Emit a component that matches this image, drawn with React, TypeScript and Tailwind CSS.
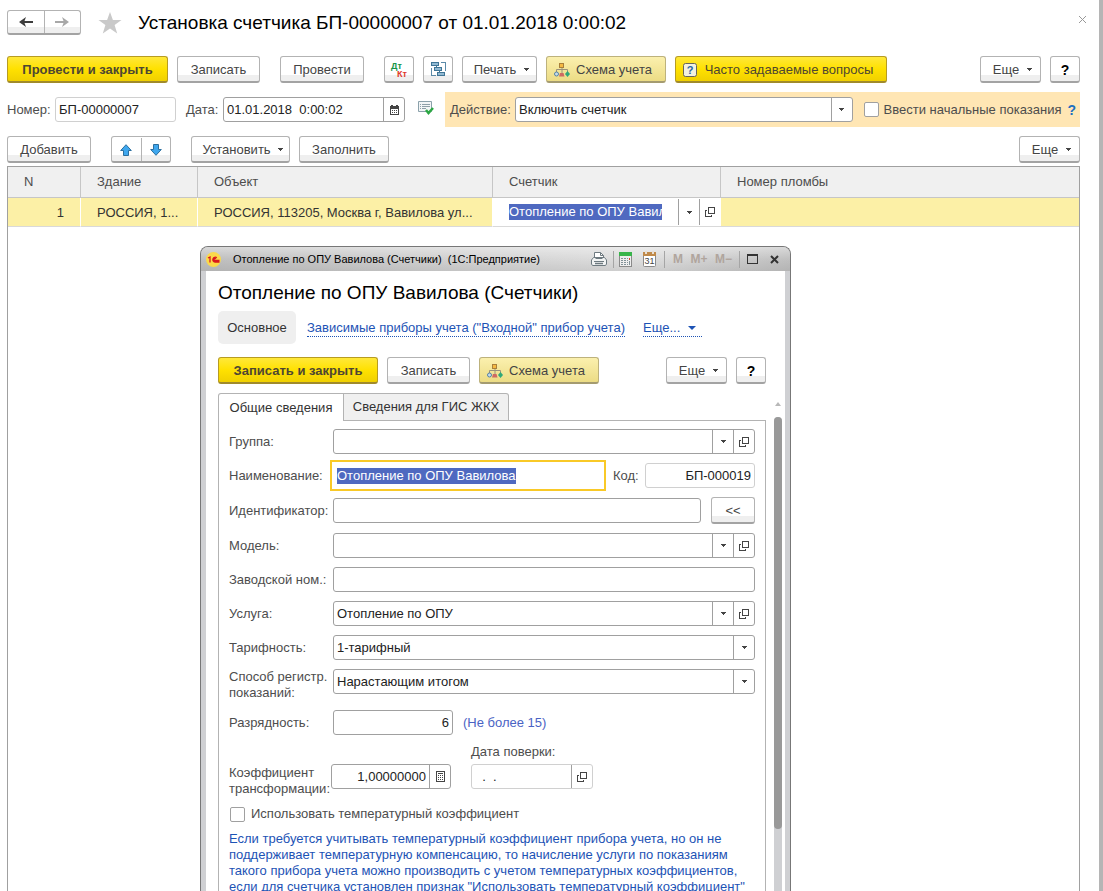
import type { ReactNode } from "react";

const BTN = "flex h-[27px] shrink-0 items-center justify-center whitespace-nowrap rounded-[3px] border border-b-2 pt-px ";
const WHITE = BTN + "border-[#b3b3b3] border-b-[#a3a3a3] bg-[linear-gradient(#fff_73%,#efefef_73%)] text-[#444]";
const YELLOW = BTN + "border-[#b79c22] border-b-[#a08a2c] bg-[linear-gradient(#ffe83a,#ffe100_50%,#f0d000)] text-[#4d4633]";
const PALE = BTN + "border-[#bdb27c] border-b-[#a49b70] bg-[linear-gradient(#fbf0ae,#ecdc85)] text-[#444]";
const FIELD = "flex h-[25px] items-stretch overflow-hidden rounded-[3px] border bg-white ";
const DARK = FIELD + "border-[#a0a0a0]";
const LIGHT = FIELD + "border-[#d0d0d0]";
const INPUT = "w-full min-w-0 flex-1 bg-transparent px-[3px] text-[#222] outline-none";
const SIDE = "flex w-[21px] shrink-0 items-center justify-center border-l border-[#a0a0a0]";

function Caret() {
  return (
    <svg width="5" height="3" viewBox="0 0 5 3" className="shrink-0" shapeRendering="crispEdges">
      <path d="M0 0H5V1H4V2H3V3H2V2H1V1H0Z" fill="#444" />
    </svg>
  );
}

function OpenIcon() {
  return (
    <svg width="10" height="10" viewBox="0 0 10 10" fill="none" stroke="#444" shapeRendering="crispEdges">
      <path d="M3.5 0.5H9.5V6.5H3.5ZM2 3.5H0.5V9.5H6.5V8" />
    </svg>
  );
}

function SchemeIcon() {
  return (
    <svg width="16" height="14" viewBox="0 0 16 14" fill="none">
      <path d="M8 4V10M2.5 10V6.5H13.5V10" stroke="#9a927a" />
      <rect x="5.5" y="0.5" width="4" height="4" fill="#f5b942" stroke="#a9803a" />
      <circle cx="2.5" cy="11" r="2" fill="#c6dcea" stroke="#5482a3" />
      <path d="M5 13.5L6 10H9.500L10.500 13.500Z" fill="#cf6a62" />
      <path d="M13.500 8L16 11L13.500 14L11 11Z" fill="#30a878" />
    </svg>
  );
}

function StructureIcon() {
  return (
    <svg width="15" height="15" viewBox="0 0 15 15" fill="none" stroke="#3f7596" shapeRendering="crispEdges">
      <path d="M10 0.5H14.5V9M0.5 6V13.5H5" stroke="#5b8aa8" />
      <rect x="0.5" y="0.5" width="7" height="3" fill="#92bad3" />
      <rect x="3.5" y="5.5" width="7" height="3" fill="#92bad3" />
      <rect x="6.5" y="10.500" width="7" height="3" fill="#92bad3" />
      <path d="M5.5 4V5M8.500 9V10" />
    </svg>
  );
}

function CalendarIcon() {
  return (
    <svg width="9" height="10" viewBox="0 0 9 10" shapeRendering="crispEdges">
      <path d="M0 1H1V0H3V1H6V0H8V1H9V10H0ZM1 4V9H8V4Z" fill="#444" fillRule="evenodd" />
      <path d="M2 5H3V6H2ZM4 5H5V6H4ZM6 5H7V6H6ZM2 7H3V8H2ZM4 7H5V8H4ZM6 7H7V8H6Z" fill="#444" />
    </svg>
  );
}

function CalcIcon() {
  return (
    <svg width="9" height="11" viewBox="0 0 9 11" shapeRendering="crispEdges">
      <path d="M0.5 0.5H8.5V10.5H0.5Z" fill="none" stroke="#444" />
      <path d="M2 2H7V3H2ZM2 4H3V5H2ZM4 4H5V5H4ZM6 4H7V5H6ZM2 6H3V7H2ZM4 6H5V7H4ZM6 6H7V7H6ZM2 8H3V9H2ZM4 8H5V9H4ZM6 8H7V9H6Z" fill="#444" />
    </svg>
  );
}

function Arrow({ up }: { up?: boolean }) {
  return (
    <svg width="12" height="12" viewBox="0 0 12 12">
      <path d={up ? "M6 0.7L11.3 6.5H8.5V11.5H3.5V6.5H0.7Z" : "M6 11.3L11.3 5.500H8.5V0.5H3.5V5.5H0.7Z"} fill="#3fa7ee" stroke="#2b6f9f" />
    </svg>
  );
}

function NavArrow({ right }: { right?: boolean }) {
  return (
    <svg width="14" height="10" viewBox="0 0 14 10" fill={right ? "#a8a8a8" : "#3c3c3c"}>
      <path d={right ? "M0 4H8.500L7 0L14 5L7 10L8.500 6H0Z" : "M14 4H5.5L7 0L0 5L7 10L5.5 6H14Z"} />
    </svg>
  );
}

function Choice({ id, value, className = "" }: { id: string; value: string; className?: string }) {
  return (
    <div className={"grid h-[25px] grid-cols-[1fr_21px] overflow-hidden rounded-[3px] border border-[#a0a0a0] bg-white " + className}>
      <select id={id} className="col-span-2 col-start-1 row-start-1 w-full appearance-none bg-transparent pl-[3px] pr-6 text-[#222] outline-none">
        <option>{value}</option>
      </select>
      <span className="pointer-events-none col-start-2 row-start-1 flex items-center justify-center border-l border-[#a0a0a0]">
        <Caret />
      </span>
    </div>
  );
}

function Lookup({ id, value }: { id: string; value: string }) {
  return (
    <div className={DARK + " flex-1"}>
      <input id={id} defaultValue={value} className={INPUT} />
      <button className={SIDE} aria-label="Выбрать"><Caret /></button>
      <button className={SIDE} aria-label="Открыть"><OpenIcon /></button>
    </div>
  );
}

function Row({ id, label, children }: { id: string; label: string; children: ReactNode }) {
  return (
    <div className="flex items-center">
      <label htmlFor={id} className="w-[104px] shrink-0 whitespace-nowrap">{label}</label>
      {children}
    </div>
  );
}

function More() {
  return (
    <button className={WHITE + " w-[61px] gap-2 pl-1"}>Еще <Caret /></button>
  );
}

function Help() {
  return <button className={WHITE + " w-[30px] text-[14px] font-bold text-black"}>?</button>;
}

function TitleTools() {
  return (
    <div className="flex h-full items-center">
      <button aria-label="Печать" className="mr-[6px]">
        <svg width="16" height="14" viewBox="0 0 16 14" fill="none" stroke="#6e7a80">
          <path d="M3.5 6V0.5H9.5L12.5 3.5V6" fill="#fff" />
          <path d="M9.5 0.5V3.5H12.5" />
          <path d="M2.5 5.5H13.5L15.5 8V12L14.5 13.5H1.5L0.5 12V8Z" fill="#f2f4f4" />
          <path d="M4.5 6.5H11.5M3 9.5H13" />
          <path d="M4 11.5H12" strokeWidth="1.500" />
        </svg>
      </button>
      <span className="h-[17px] w-px bg-[#a5a5a5]" />
      <button aria-label="Калькулятор" className="ml-[5px] mr-[11px]">
        <svg width="13" height="15" viewBox="0 0 13 15" shapeRendering="crispEdges">
          <path d="M0.5 0.5H12.5V14.5H0.5Z" fill="#eee" stroke="#8a8a8a" />
          <path d="M0 0H13V4H0Z" fill="#38b54a" />
          <path d="M2 6H4V7H2ZM5 6H7V7H5ZM2 8H4V9H2ZM5 8H7V9H5ZM2 10H4V11H2ZM5 10H7V11H5ZM2 12H4V13H2ZM5 12H7V13H5ZM8 6H9V7H8ZM8 8H9V9H8ZM8 10H9V11H8ZM8 12H9V13H8Z" fill="#829298" />
          <path d="M10 6H11V8H10Z" fill="#e2452f" />
          <path d="M10 9H11V13H10Z" fill="#829298" />
        </svg>
      </button>
      <button aria-label="Календарь" className="mr-[8px]">
        <svg width="13" height="16" viewBox="0 0 13 16">
          <rect x="0.5" y="1.5" width="12" height="14" rx="1" fill="#fff" stroke="#8a8a8a" />
          <path d="M0 1H13V5H0Z" fill="#c08a4a" />
          <path d="M3 0V3M10 0V3" stroke="#e9dfd2" strokeWidth="2" />
          <text x="6.500" y="13" fontSize="9" textAnchor="middle" fill="#444">31</text>
        </svg>
      </button>
      <span className="h-[17px] w-px bg-[#a5a5a5]" />
      <div className="flex w-[74px] justify-between pl-2 pr-[7px] text-[12px] font-bold text-[#b0a59d]">
        <button>M</button><button>M+</button><button>M−</button>
      </div>
      <span className="h-[17px] w-px bg-[#a5a5a5]" />
      <button aria-label="Развернуть" className="ml-[7px] mr-[12px]">
        <svg width="11" height="10" viewBox="0 0 11 10" shapeRendering="crispEdges">
          <path d="M0.5 0.5H10.5V9.5H0.5Z" fill="none" stroke="#333" /><path d="M0 0H11V2H0Z" fill="#333" />
        </svg>
      </button>
      <button aria-label="Закрыть окно">
        <svg width="9" height="9" viewBox="0 0 9 9"><path d="M1 1L8 8M8 1L1 8" stroke="#333" strokeWidth="2" /></svg>
      </button>
    </div>
  );
}

function MeterWindow() {
  return (
    <section className="absolute bottom-0 left-[200px] top-[246px] flex w-[591px] flex-col overflow-hidden rounded-t-[8px] border border-b-0 border-[#777] bg-[#cfd0d3]">
      <header className="flex h-6 shrink-0 items-center bg-[linear-gradient(#fff6,#fff0_50%,#0001),linear-gradient(90deg,#bfbfbf,#d4d4d4_50%,#dedede_75%,#c0c0c0)] pl-[5px] pr-[11px] text-black">
        <svg width="15" height="15" viewBox="0 0 15 15" className="mr-[12px] shrink-0">
          <circle cx="7.5" cy="7.5" r="7.5" fill="#fbd94a" />
          <path d="M2 6L4 5V10.500M10.8 5.800A2.400 2.400 0 1 0 9 10H13.500M9.800 7A1 1 0 1 0 9 8.500H13.500" fill="none" stroke="#d8171e" strokeWidth="1.300" />
        </svg>
        <h2 className="flex-1 whitespace-pre text-[11px]">Отопление по ОПУ Вавилова (Счетчики)  (1С:Предприятие)</h2>
        <TitleTools />
      </header>
      <div className="mx-[5px] flex min-h-0 flex-1 flex-col bg-white pl-[12px]">
        <h1 className="mt-[10px] text-[19px] leading-6 text-black">Отопление по ОПУ Вавилова (Счетчики)</h1>
        <nav className="mt-[6px] flex items-center">
          <button className="h-[33px] w-[78px] rounded-[5px] bg-[#efefef] pt-px text-[#333]">Основное</button>
          <a href="#devices" className="ml-[11px] mt-[2px] whitespace-nowrap border-b border-dotted border-[#1d53b5] leading-4 text-[#1d53b5]">Зависимые приборы учета ("Входной" прибор учета)</a>
          <a href="#more" className="ml-[18px] mt-[2px] flex w-[59px] items-center gap-2 whitespace-nowrap border-b border-dotted border-[#1d53b5] leading-4 text-[#1d53b5]">
            Еще...
            <svg width="8" height="4" viewBox="0 0 8 4"><path d="M0 0H8L4 4Z" fill="#1d53b5" /></svg>
          </a>
        </nav>
        <div className="mr-[19px] mt-[13px] flex gap-[9px]">
          <button className={YELLOW + " w-[160px] font-bold"}>Записать и закрыть</button>
          <button className={WHITE + " w-[83px]"}>Записать</button>
          <button className={PALE + " w-[120px] gap-[6px] pr-[6px]"}><SchemeIcon />Схема учета</button>
          <div className="ml-auto flex gap-[9px]"><More /><Help /></div>
        </div>
        <div className="mt-[9px] flex min-h-0 flex-1">
          <div className="flex min-w-0 flex-1 flex-col">
            <div className="z-10 flex" role="tablist">
              <button role="tab" aria-selected="true" className="-mb-px h-7 w-[126px] rounded-tl-[3px] border border-b-0 border-[#b3b3b3] bg-white text-[#333]">Общие сведения</button>
              <button role="tab" aria-selected="false" className="h-7 w-[165px] rounded-tr-[3px] border border-l-0 border-[#b3b3b3] bg-[#f0f0f0] text-[#333]">Сведения для ГИС ЖКХ</button>
            </div>
            <div className="-mt-px flex min-h-0 flex-1 flex-col gap-[9px] border border-b-0 border-[#b3b3b3] pl-[10px] pr-[10px] pt-[8px]">
              <Row id="group" label="Группа:"><Lookup id="group" value="" /></Row>
              <Row id="name" label="Наименование:">
                <div className="-my-[3px] -ml-[3px] flex h-[31px] w-[276px] items-center border-2 border-[#f9c927] bg-white pl-[5px]">
                  <input id="name" defaultValue="Отопление по ОПУ Вавилова" className="h-4 bg-[#4f69c0] text-white outline-none [field-sizing:content]" />
                </div>
                <label htmlFor="code" className="ml-[7px]">Код:</label>
                <div className={LIGHT + " ml-auto w-[110px]"}><input id="code" defaultValue="БП-000019" className={INPUT + " text-right"} /></div>
              </Row>
              <Row id="ident" label="Идентификатор:">
                <div className={DARK + " flex-1"}><input id="ident" className={INPUT} /></div>
                <button className={WHITE + " ml-[10px] w-[44px]"}>&lt;&lt;</button>
              </Row>
              <Row id="model" label="Модель:"><Lookup id="model" value="" /></Row>
              <Row id="serial" label="Заводской ном.:"><div className={DARK + " flex-1"}><input id="serial" className={INPUT} /></div></Row>
              <Row id="service" label="Услуга:"><Lookup id="service" value="Отопление по ОПУ" /></Row>
              <Row id="tariff" label="Тарифность:"><Choice id="tariff" value="1-тарифный" className="flex-1" /></Row>
              <div className="flex items-start">
                <label htmlFor="method" className="w-[104px] shrink-0 leading-4">Способ регистр. показаний:</label>
                <Choice id="method" value="Нарастающим итогом" className="flex-1" />
              </div>
              <Row id="digits" label="Разрядность:">
                <div className={DARK + " w-[120px]"}><input id="digits" defaultValue="6" className={INPUT + " text-right"} /></div>
                <span className="ml-[10px] text-[#4a63c4]">(Не более 15)</span>
              </Row>
              <div className="flex items-end">
                <label htmlFor="ratio" className="-mb-2 w-[102px] shrink-0 leading-4">Коэффициент трансформации:</label>
                <div className={DARK + " w-[120px]"}>
                  <input id="ratio" defaultValue="1,00000000" className={INPUT + " text-right"} />
                  <button className={SIDE} aria-label="Калькулятор"><CalcIcon /></button>
                </div>
                <div className="ml-[20px] flex flex-col gap-1">
                  <label htmlFor="check" className="leading-4">Дата поверки:</label>
                  <div className={LIGHT + " w-[122px]"}>
                    <input id="check" defaultValue="  .  ." className={INPUT + " whitespace-pre"} />
                    <button className={SIDE} aria-label="Открыть"><OpenIcon /></button>
                  </div>
                </div>
              </div>
              <label className="mt-2 flex items-center gap-[6px] pl-px leading-4">
                <input type="checkbox" className="h-[15px] w-[15px] appearance-none rounded-[2px] border border-[#a0a0a0] bg-white" />
                Использовать температурный коэффициент
              </label>
              <p className="whitespace-nowrap leading-4 text-[#1d53b5]">
                Если требуется учитывать температурный коэффициент прибора учета, но он не<br />
                поддерживает температурную компенсацию, то начисление услуги по показаниям<br />
                такого прибора учета можно производить с учетом температурных коэффициентов,<br />
                если для счетчика установлен признак "Использовать температурный коэффициент"
              </p>
            </div>
          </div>
          <div className="flex w-[19px] flex-col items-center pl-[5px] pt-[9px]">
            <svg width="6" height="4" viewBox="0 0 6 4" className="mb-[11px] shrink-0"><path d="M0 4L3 0L6 4Z" fill="#b8b8b8" /></svg>
            <div className="flex w-2 flex-1 flex-col rounded-t-[4px] bg-[#cfd0d3]">
              <div className="h-[87%] rounded-[4px] bg-[#999]" />
            </div>
          </div>
        </div>
      </div>
    </section>
  );
}

export default function App() {
  const th = "border-r border-[#c6c6c6] px-4 text-left font-normal last:border-r-0";
  const td = "border-r border-white px-4 pt-[2px] last:border-r-0";
  return (
    <main className="relative flex h-screen flex-col overflow-hidden border-r-4 border-[#b5b5b5] bg-white pl-[7px] pr-[19px] pt-[10px] font-['Liberation_Sans',Arial,sans-serif] text-[13px] leading-4 text-[#4d4d4d]">
      <header className="flex items-center">
        <div className="flex h-[25px] w-[74px] divide-x divide-[#b3b3b3] rounded-[3px] border border-b-2 border-[#b3b3b3] border-b-[#a3a3a3] bg-[linear-gradient(#fff_73%,#efefef_73%)]">
          <button aria-label="Назад" className="flex flex-1 items-center justify-center"><NavArrow /></button>
          <button aria-label="Вперед" className="flex flex-1 items-center justify-center"><NavArrow right /></button>
        </div>
        <svg width="24" height="22" viewBox="0 0 24 22" className="ml-[17px]"><path d="M12 0L14.9 8H23.5L16.6 13.100L19.200 21.500L12 16.500L4.800 21.500L7.400 13.100L0.500 8H9.100Z" fill="#c9c9c9" /></svg>
        <h1 className="ml-[16px] whitespace-nowrap pt-px text-[19px] leading-6 text-black">Установка счетчика БП-00000007 от 01.01.2018 0:00:02</h1>
        <button aria-label="Закрыть" className="-mr-[7px] mb-[6px] ml-auto">
          <svg width="9" height="9" viewBox="0 0 9 9"><path d="M1 1L8 8M8 1L1 8" stroke="#999" /></svg>
        </button>
      </header>

      <div className="mt-[21px] flex gap-[9px]">
        <button className={YELLOW + " w-[161px] font-bold"}>Провести и закрыть</button>
        <button className={WHITE + " w-[83px]"}>Записать</button>
        <button className={WHITE + " mx-[11px] w-[84px]"}>Провести</button>
        <button className={WHITE + " w-[30px]"} aria-label="Дт Кт">
          <svg width="18" height="18" viewBox="0 0 18 18" fontSize="9" fontWeight="bold">
            <text x="1" y="8" fill="#159447">Дт</text><text x="7" y="16" fill="#e0392c">Кт</text>
          </svg>
        </button>
        <button className={WHITE + " w-[30px]"} aria-label="Структура подчиненности"><StructureIcon /></button>
        <button className={WHITE + " w-[75px] gap-2 pl-1"}>Печать <Caret /></button>
        <button className={PALE + " w-[120px] gap-[6px] pr-[6px]"}><SchemeIcon />Схема учета</button>
        <button className={YELLOW + " w-[212px] gap-2 pr-[6px]"}>
          <svg width="14" height="14" viewBox="0 0 14 14">
            <rect x="0.5" y="0.5" width="13" height="13" rx="2" fill="#f3f1e0" stroke="#66655c" />
            <text x="7" y="11" fontSize="11" fontWeight="bold" textAnchor="middle" fill="#2565a5">?</text>
          </svg>
          Часто задаваемые вопросы
        </button>
        <div className="ml-auto flex gap-[9px]"><More /><Help /></div>
      </div>

      <div className="mt-[9px] flex h-[35px] items-center">
        <label htmlFor="number" className="w-[48px]">Номер:</label>
        <div className={LIGHT + " w-[121px]"}><input id="number" defaultValue="БП-00000007" className={INPUT} /></div>
        <label htmlFor="date" className="ml-[10px] w-[37px]">Дата:</label>
        <div className={DARK + " w-[182px]"}>
          <input id="date" defaultValue="01.01.2018  0:00:02" className={INPUT} />
          <button className={SIDE} aria-label="Календарь"><CalendarIcon /></button>
        </div>
        <svg width="16" height="14" viewBox="0 0 16 14" className="mb-[3px] ml-[13px] shrink-0">
          <path d="M0.5 0.5H13.5V10.500H0.5Z" fill="#f2f5f6" stroke="#8ba1ab" />
          <path d="M4 3.500H12M4 5.500H12M4 7.500H8M2 3.500H3M2 5.500H3M2 7.500H3" stroke="#8d9fa7" />
          <path d="M8 9L10.500 12L15 7" fill="none" stroke="#2ca744" strokeWidth="2.500" />
        </svg>
        <div className="ml-[11px] flex h-full min-w-0 flex-1 items-center whitespace-nowrap bg-[#ffe6b4] pl-[5px] pr-[4px]">
          <label htmlFor="action" className="w-[65px] shrink-0">Действие:</label>
          <Choice id="action" value="Включить счетчик" className="min-w-0 flex-1" />
          <label className="ml-[11px] flex shrink-0 items-center gap-[5px]">
            <input type="checkbox" className="h-[15px] w-[15px] appearance-none rounded-[2px] border border-[#a0a0a0] bg-white" />
            Ввести начальные показания
          </label>
          <button className="ml-[6px] text-[14px] font-bold text-[#1d6fc0]">?</button>
        </div>
      </div>

      <div className="mt-[9px] flex">
        <button className={WHITE + " w-[84px]"}>Добавить</button>
        <div className={WHITE + " ml-[20px] w-[60px] divide-x divide-[#b3b3b3]"}>
          <button aria-label="Вверх" className="flex h-full flex-1 items-center justify-center"><Arrow up /></button>
          <button aria-label="Вниз" className="flex h-full flex-1 items-center justify-center"><Arrow /></button>
        </div>
        <button className={WHITE + " ml-[20px] w-[99px] gap-[7px] pl-1"}>Установить <Caret /></button>
        <button className={WHITE + " ml-[9px] w-[90px]"}>Заполнить</button>
        <div className="ml-auto"><More /></div>
      </div>

      <div className="mt-[3px] flex-1 border border-b-0 border-[#a0a0a0]">
        <table className="w-full table-fixed border-separate border-spacing-0 whitespace-nowrap">
          <colgroup>
            <col className="w-[73px]" /><col className="w-[117px]" /><col className="w-[295px]" /><col className="w-[228px]" /><col />
          </colgroup>
          <thead>
            <tr className="h-[31px] bg-[#f0f0f0] [&>th]:border-b [&>th]:border-b-[#c6c6c6]">
              <th className={th}>N</th><th className={th}>Здание</th><th className={th}>Объект</th><th className={th}>Счетчик</th><th className={th}>Номер пломбы</th>
            </tr>
          </thead>
          <tbody>
            <tr className="h-[29px] bg-[#fcf0a6] text-[#333] [&>td]:border-b [&>td]:border-b-[#d9d9d9]">
              <td className={td + " text-right"}>1</td>
              <td className={td}>РОССИЯ, 1...</td>
              <td className={td}>РОССИЯ, 113205, Москва г, Вавилова ул...</td>
              <td className="bg-white p-0">
                <div className="flex h-7 items-center pl-4">
                  <input aria-label="Счетчик" defaultValue="Отопление по ОПУ Вавилова" className="h-4 w-[153px] bg-[#4f69c0] text-white outline-none" />
                  <div className="ml-auto flex h-[26px]">
                    <button className={SIDE} aria-label="Выбрать"><Caret /></button>
                    <button className={SIDE + " mr-px"} aria-label="Открыть"><OpenIcon /></button>
                  </div>
                </div>
              </td>
              <td className={td} />
            </tr>
          </tbody>
        </table>
      </div>

      <MeterWindow />
    </main>
  );
}
